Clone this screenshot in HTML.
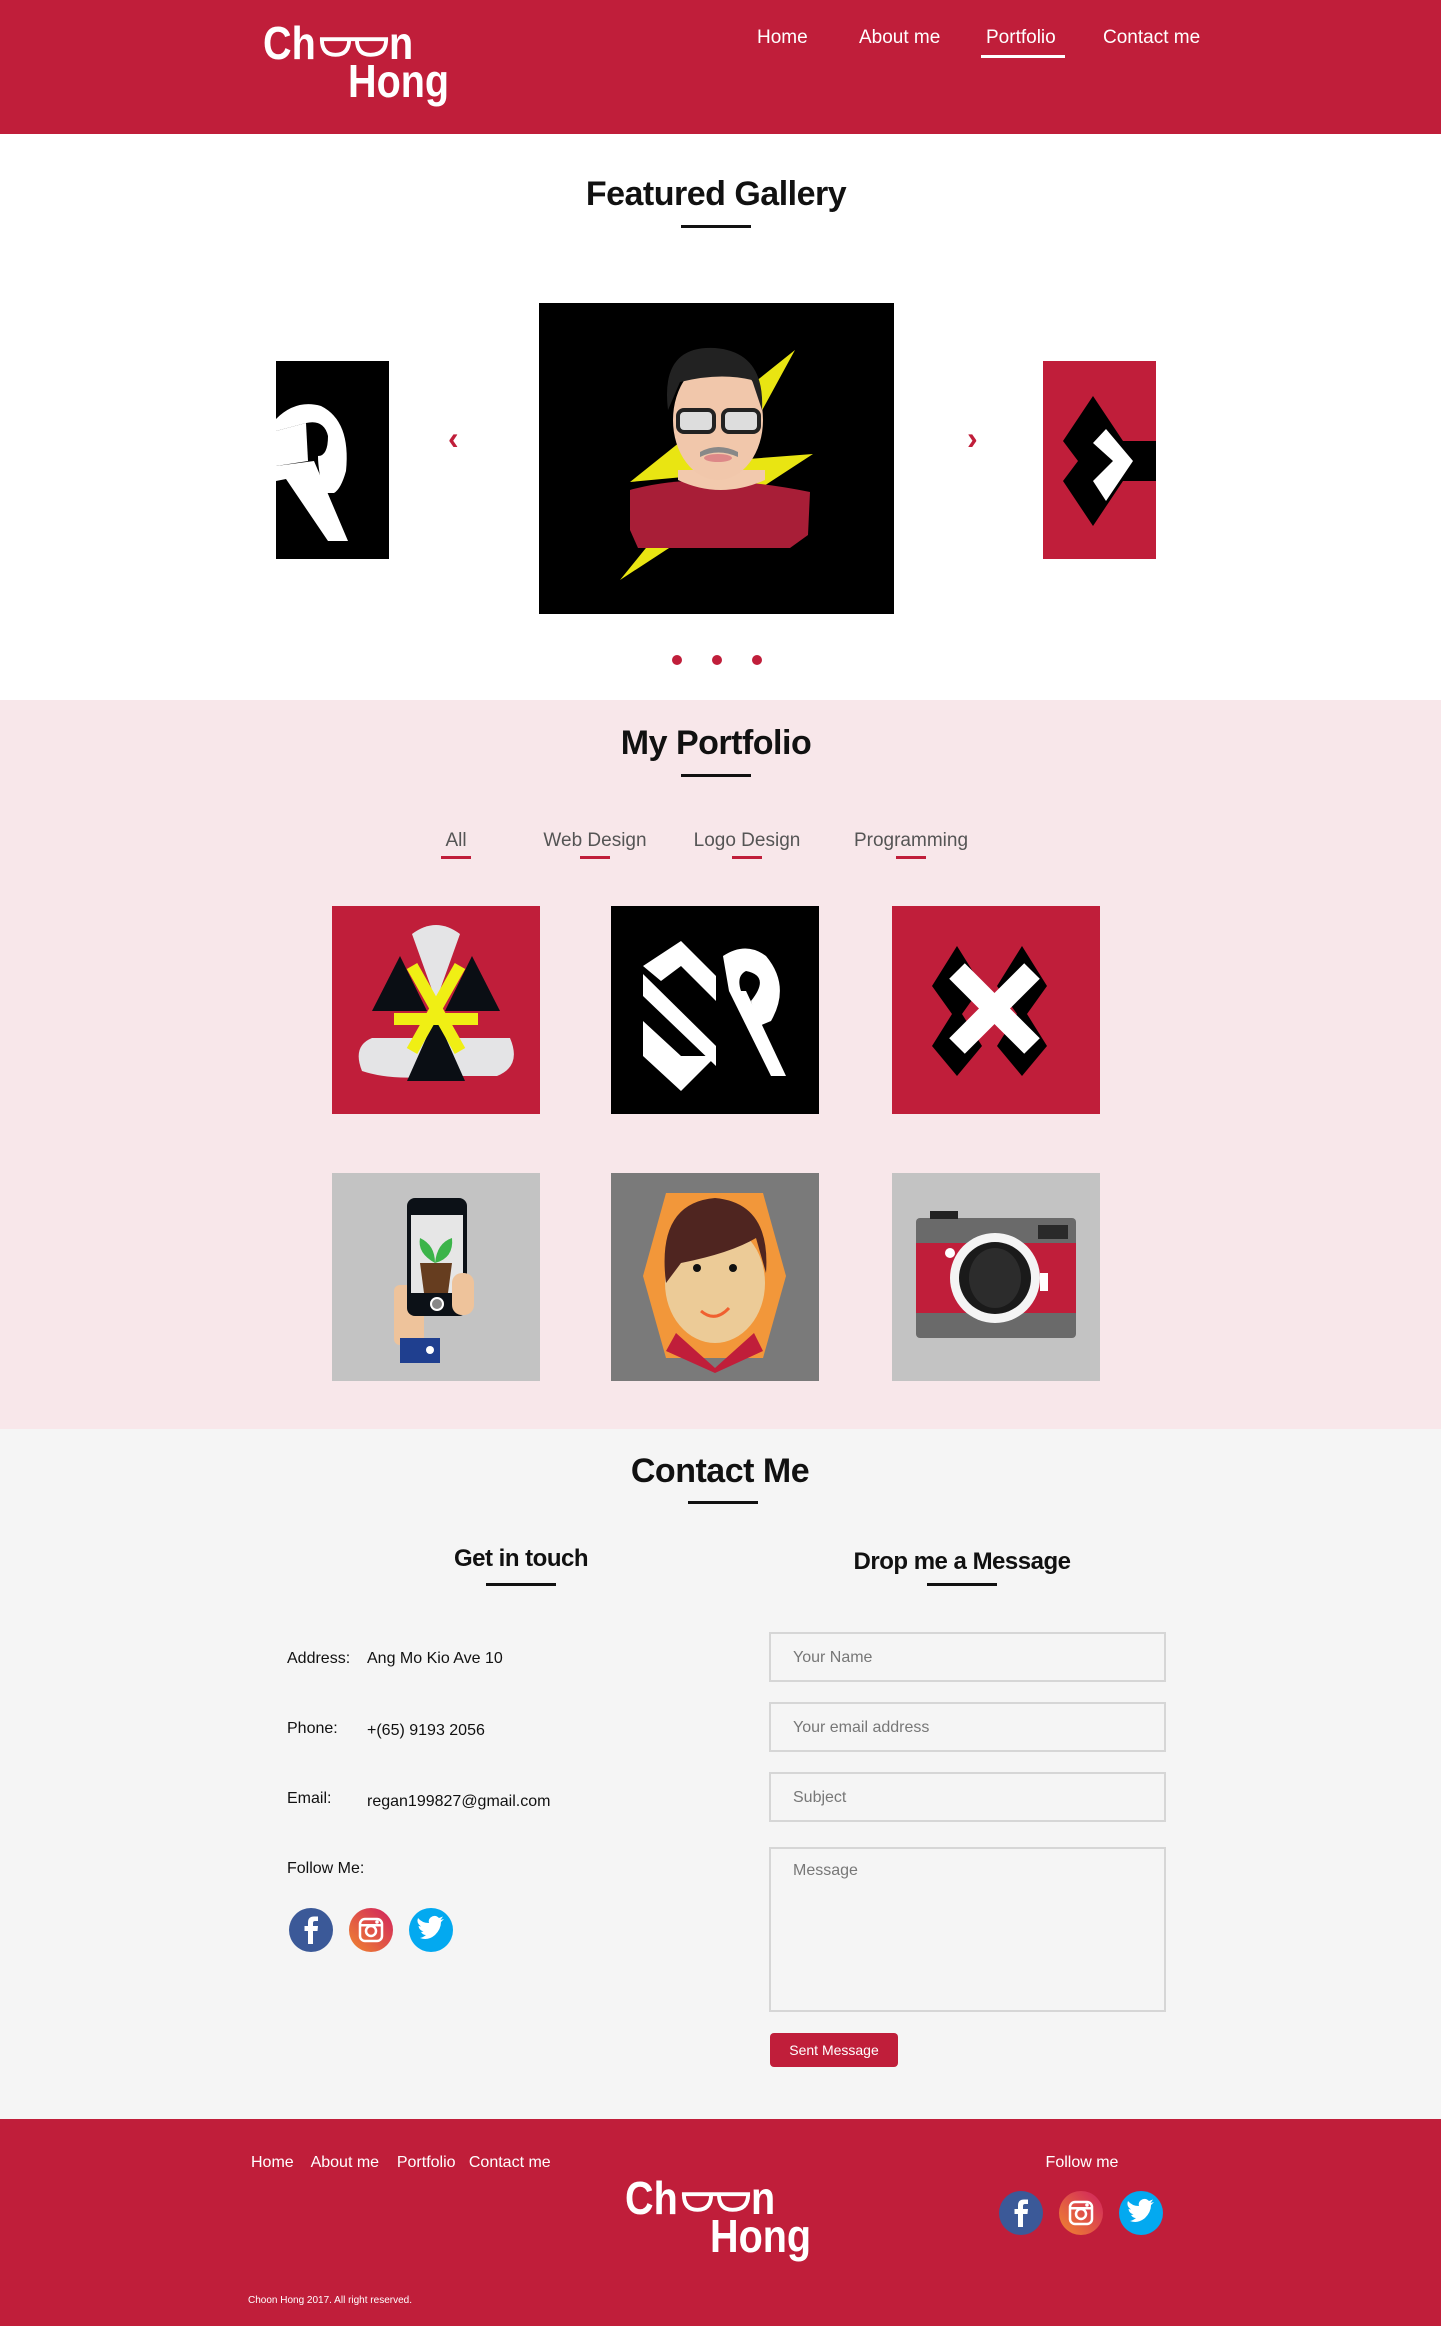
<!DOCTYPE html>
<html><head><meta charset="utf-8">
<style>
*{margin:0;padding:0;box-sizing:border-box}
body{width:1441px;height:2328px;position:relative;background:#fff;font-family:"Liberation Sans",sans-serif;overflow:hidden}
.a{position:absolute}
.red{background:#c01e3a}
.nav{color:#fff;font-size:19px;top:27px}
.h2{font-weight:bold;font-size:34px;color:#111;text-align:center;width:400px;letter-spacing:-0.5px}
.ul{height:3px;background:#111;width:70px}
.logo{color:#fff;font-weight:bold;font-size:46px;line-height:46px;transform:scaleX(0.86);transform-origin:0 0}
.flt{font-size:19px;color:#555;top:830px;text-align:center;width:160px}
.flu{height:3px;background:#c01e3a;width:30px;top:856px}
.tile{width:208px;height:208px;overflow:hidden}
.lbl{font-size:16px;color:#111}
.inp{border:2px solid #d6d6d6;background:#f5f5f5;color:#777;font-size:16px;padding-left:22px;left:769px;width:397px}
</style></head><body>
<!-- header -->
<div class="a red" style="left:0;top:0;width:1441px;height:134px"></div>
<div class="a logo" style="left:263px;top:20px">Ch</div>
<svg class="a" style="left:318px;top:36px" width="72" height="22" viewBox="0 0 74 22"><path d="M2 3 H72 M4 3 Q4 19 18 19 Q32 19 32 3 M40 3 Q40 19 54 19 Q70 19 70 3" fill="none" stroke="#fff" stroke-width="4"/></svg>
<div class="a logo" style="left:389px;top:20px">n</div>
<div class="a logo" style="left:348px;top:58px">Hong</div>
<div class="a nav" style="left:757px">Home</div>
<div class="a nav" style="left:859px">About me</div>
<div class="a nav" style="left:986px">Portfolio</div>
<div class="a nav" style="left:1103px">Contact me</div>
<div class="a" style="left:981px;top:55px;width:84px;height:3px;background:#fff"></div>

<!-- featured -->
<div class="a h2" style="left:516px;top:175px">Featured Gallery</div>
<div class="a ul" style="left:681px;top:225px"></div>
<svg class="a" style="left:276px;top:361px" width="113" height="198" viewBox="0 0 113 198"><rect width="113" height="198" fill="#000"/><path d="M0 58 Q20 38 45 45 Q75 60 70 110 Q65 128 58 132 L48 132 Q42 110 42 95 Q52 95 52 75 Q48 58 30 62 L0 70 Z" fill="#fff"/><path d="M0 70 L30 62 L32 100 L0 105 Z" fill="#fff"/><path d="M0 105 L38 100 L72 180 L52 180 L10 118 L0 120 Z" fill="#fff"/></svg>
<div class="a" style="left:448px;top:420px;color:#c01e3a;font-size:32px;font-weight:bold">&#x2039;</div>
<svg class="a" style="left:539px;top:303px" width="355" height="311" viewBox="539 303 355 311"><rect x="539" y="303" width="355" height="311" fill="#000"/>
<polygon points="795,350 630,482 705,475 620,580 813,454 735,460" fill="#e9e512"/>
<path d="M630 490 Q700 470 810 492 L808 535 L790 548 L638 548 L630 530 Z" fill="#a81e37"/>
<path d="M678 480 Q720 500 765 480 L765 470 L678 470 Z" fill="#f2c9ad"/>
<ellipse cx="718" cy="420" rx="45" ry="60" fill="#f1c7ab"/>
<path d="M668 410 Q660 345 715 348 Q765 352 762 410 L752 380 Q720 372 680 382 Z" fill="#222"/>
<rect x="678" y="410" width="36" height="22" rx="6" fill="#ddd" stroke="#222" stroke-width="4"/><rect x="723" y="410" width="36" height="22" rx="6" fill="#ddd" stroke="#222" stroke-width="4"/>
<path d="M700 452 Q718 442 738 452 L738 457 Q718 448 700 457Z" fill="#888"/><ellipse cx="718" cy="458" rx="14" ry="4" fill="#d88"/>
</svg>
<div class="a" style="left:967px;top:420px;color:#c01e3a;font-size:32px;font-weight:bold">&#x203A;</div>
<svg class="a" style="left:1043px;top:361px" width="113" height="198" viewBox="0 0 113 198"><rect width="113" height="198" fill="#c01e3a"/><polygon points="50,35 80,80 113,80 113,120 80,120 50,165 20,120 35,100 20,80" fill="#000"/><polygon points="63,68 90,100 63,140 50,120 70,100 50,82" fill="#fff"/></svg>
<div class="a" style="left:672px;top:655px;width:10px;height:10px;border-radius:50%;background:#c01e3a"></div>
<div class="a" style="left:712px;top:655px;width:10px;height:10px;border-radius:50%;background:#c01e3a"></div>
<div class="a" style="left:752px;top:655px;width:10px;height:10px;border-radius:50%;background:#c01e3a"></div>

<!-- portfolio -->
<div class="a" style="left:0;top:700px;width:1441px;height:729px;background:#f8e7ea"></div>
<div class="a h2" style="left:516px;top:724px">My Portfolio</div>
<div class="a ul" style="left:681px;top:774px"></div>
<div class="a flt" style="left:376px">All</div><div class="a flu" style="left:441px"></div>
<div class="a flt" style="left:515px">Web Design</div><div class="a flu" style="left:580px"></div>
<div class="a flt" style="left:667px">Logo Design</div><div class="a flu" style="left:732px"></div>
<div class="a flt" style="left:831px">Programming</div><div class="a flu" style="left:896px"></div>

<svg class="a tile" style="left:332px;top:906px" viewBox="0 0 208 208"><rect width="208" height="208" fill="#c01e3a"/>
<path d="M80 28 Q104 10 128 28 L104 95 Z" fill="#e4e4e6"/><path d="M40 132 L130 132 L104 170 Q60 175 30 165 Q20 140 40 132Z" fill="#e4e4e6"/><path d="M128 132 L178 132 Q190 160 165 170 L104 170 Z" fill="#e4e4e6"/>
<polygon points="68,50 40,105 95,105" fill="#0a0e14"/><polygon points="140,50 168,105 113,105" fill="#0a0e14"/><polygon points="104,110 75,175 133,175" fill="#0a0e14"/>
<path d="M80 60 L128 145 M128 60 L80 145 M62 113 H146" stroke="#f0ef14" stroke-width="12"/></svg>
<svg class="a tile" style="left:611px;top:906px" viewBox="0 0 208 208"><rect width="208" height="208" fill="#000"/>
<polygon points="70,35 105,70 105,95 70,60 50,75 32,60" fill="#fff"/><polygon points="32,68 105,140 105,160 32,90" fill="#fff"/><polygon points="32,115 70,150 105,150 70,185 32,150" fill="#fff"/>
<path d="M112 50 Q135 35 155 50 Q180 80 160 115 L148 120 L140 95 Q160 70 135 65 Q125 70 130 85 L118 85 Z" fill="#fff"/><polygon points="118,85 135,85 175,170 160,170" fill="#fff"/></svg>
<svg class="a tile" style="left:892px;top:906px" viewBox="0 0 208 208"><rect width="208" height="208" fill="#c01e3a"/>
<polygon points="40,40 65,80 40,115 15,80" fill="#000" transform="translate(25,0)"/><polygon points="105,40 130,80 105,115 80,80" fill="#000" transform="translate(25,0)"/>
<polygon points="40,100 65,140 40,170 15,140" fill="#000" transform="translate(25,0)"/><polygon points="105,100 130,140 105,170 80,140" fill="#000" transform="translate(25,0)"/>
<path d="M65 65 L140 140 M140 65 L65 140" stroke="#fff" stroke-width="22"/></svg>

<svg class="a tile" style="left:332px;top:1173px" viewBox="0 0 208 208"><rect width="208" height="208" fill="#c3c3c3"/>
<rect x="62" y="112" width="30" height="60" rx="6" fill="#eec39b"/><rect x="68" y="165" width="40" height="25" fill="#1f3f8f"/><circle cx="98" cy="177" r="4" fill="#fff"/>
<rect x="75" y="25" width="60" height="118" rx="8" fill="#0c1117"/><rect x="79" y="42" width="52" height="78" fill="#e6e6e6"/><circle cx="105" cy="131" r="6" fill="#888" stroke="#fff" stroke-width="2"/>
<path d="M103 90 Q85 80 88 65 Q103 72 103 90 Q105 70 120 65 Q122 85 103 90" fill="#3cb44a"/><polygon points="88,90 120,90 116,120 92,120" fill="#663d1f"/>
<rect x="120" y="100" width="22" height="42" rx="10" fill="#eec39b"/></svg>
<svg class="a tile" style="left:611px;top:1173px" viewBox="0 0 208 208"><rect width="208" height="208" fill="#7a7a7a"/>
<polygon points="55,20 152,20 175,103 152,185 55,185 32,103" fill="#f2973a"/>
<ellipse cx="104" cy="110" rx="50" ry="60" fill="#eccb97"/><path d="M55 110 Q45 30 104 25 Q160 30 155 100 L145 65 Q120 80 70 90 Z" fill="#4f2520"/>
<circle cx="86" cy="95" r="4" fill="#111"/><circle cx="122" cy="95" r="4" fill="#111"/><path d="M90 138 Q104 150 118 135" stroke="#f06030" stroke-width="3" fill="none"/>
<polygon points="55,178 65,160 104,195 143,160 152,178 104,200" fill="#c01e3a"/></svg>
<svg class="a tile" style="left:892px;top:1173px" viewBox="0 0 208 208"><rect width="208" height="208" fill="#c3c3c3"/>
<rect x="24" y="45" width="160" height="120" rx="4" fill="#6a6a6a"/><rect x="38" y="38" width="28" height="8" fill="#222"/><rect x="146" y="52" width="30" height="14" fill="#2a2a2a"/>
<rect x="24" y="70" width="160" height="70" fill="#c01e3a"/><circle cx="103" cy="105" r="45" fill="#f4f4f4"/><circle cx="103" cy="105" r="36" fill="#1a1a1a"/><ellipse cx="103" cy="105" rx="26" ry="30" fill="#2c2c2c"/><circle cx="58" cy="80" r="5" fill="#fff"/><rect x="148" y="100" width="8" height="18" fill="#fff"/></svg>

<!-- contact -->
<div class="a" style="left:0;top:1429px;width:1441px;height:690px;background:#f5f5f5"></div>
<div class="a h2" style="left:520px;top:1452px">Contact Me</div>
<div class="a ul" style="left:688px;top:1501px"></div>
<div class="a" style="left:371px;top:1545px;width:300px;text-align:center;font-weight:bold;font-size:24px;color:#111;letter-spacing:-0.5px">Get in touch</div>
<div class="a ul" style="left:486px;top:1583px"></div>
<div class="a" style="left:762px;top:1548px;width:400px;text-align:center;font-weight:bold;font-size:24px;color:#111;letter-spacing:-0.5px">Drop me a Message</div>
<div class="a ul" style="left:927px;top:1583px"></div>
<div class="a lbl" style="left:287px;top:1650px">Address:</div><div class="a lbl" style="left:367px;top:1650px">Ang Mo Kio Ave 10</div>
<div class="a lbl" style="left:287px;top:1720px">Phone:</div><div class="a lbl" style="left:367px;top:1722px">+(65) 9193 2056</div>
<div class="a lbl" style="left:287px;top:1790px">Email:</div><div class="a lbl" style="left:367px;top:1793px">regan199827@gmail.com</div>
<div class="a lbl" style="left:287px;top:1860px">Follow Me:</div>

<svg width="0" height="0" style="position:absolute"><defs>
<linearGradient id="ig" x1="0" y1="1" x2="1" y2="0"><stop offset="0" stop-color="#f0862f"/><stop offset="1" stop-color="#d0215f"/></linearGradient></defs></svg>
<svg class="a" style="left:289px;top:1908px" width="164" height="44" viewBox="0 0 164 44">
<circle cx="22" cy="22" r="22" fill="#3b5998"/><path d="M24 36 V23 H28.5 L29 18 H24 V15 Q24 13 26 13 H29 V8.5 H25 Q19 8.5 19 14.5 V18 H15.5 V23 H19 V36Z" fill="#fff"/>
<circle cx="82" cy="22" r="22" fill="url(#ig)"/><rect x="71" y="11" width="22" height="22" rx="5" fill="none" stroke="#fff" stroke-width="2.5"/><circle cx="82" cy="23" r="5" fill="none" stroke="#fff" stroke-width="2.5"/><rect x="71" y="16" width="22" height="2.5" fill="#fff"/><circle cx="88" cy="14" r="1.8" fill="#fff"/>
<circle cx="142" cy="22" r="22" fill="#03a9f0"/><path d="M131 30 Q139 33 146 27 Q152 21 152 14 L155 11 L151.5 12 L154 8.5 L150 10 Q146 6 141.5 9.5 Q139 12 140 15 Q133 15 129 10 Q127 15 132 18.5 L129.5 18 Q130 22 134.5 23.5 L132 24 Q134 27 137 27 Q134 29.5 131 30Z" fill="#fff"/></svg>

<div class="a inp" style="top:1632px;height:50px;line-height:48px">Your Name</div>
<div class="a inp" style="top:1702px;height:50px;line-height:48px">Your email address</div>
<div class="a inp" style="top:1772px;height:50px;line-height:48px">Subject</div>
<div class="a inp" style="top:1847px;height:165px;padding-top:13px">Message</div>
<div class="a" style="left:770px;top:2033px;width:128px;height:34px;background:#c01e3a;border-radius:4px;color:#fff;font-size:14px;text-align:center;line-height:34px">Sent Message</div>

<!-- footer -->
<div class="a red" style="left:0;top:2119px;width:1441px;height:207px"></div>
<div class="a" style="left:251px;top:2154px;color:#fff;font-size:16px">Home&nbsp;&nbsp;&nbsp; About me&nbsp;&nbsp;&nbsp; Portfolio&nbsp;&nbsp; Contact me</div>
<div class="a logo" style="left:625px;top:2175px">Ch</div>
<svg class="a" style="left:680px;top:2191px" width="72" height="22" viewBox="0 0 74 22"><path d="M2 3 H72 M4 3 Q4 19 18 19 Q32 19 32 3 M40 3 Q40 19 54 19 Q70 19 70 3" fill="none" stroke="#fff" stroke-width="4"/></svg>
<div class="a logo" style="left:751px;top:2175px">n</div>
<div class="a logo" style="left:710px;top:2213px">Hong</div>
<div class="a" style="left:1032px;top:2154px;width:100px;text-align:center;color:#fff;font-size:16px">Follow me</div>
<svg class="a" style="left:999px;top:2191px" width="164" height="44" viewBox="0 0 164 44">
<circle cx="22" cy="22" r="22" fill="#3b5998"/><path d="M24 36 V23 H28.5 L29 18 H24 V15 Q24 13 26 13 H29 V8.5 H25 Q19 8.5 19 14.5 V18 H15.5 V23 H19 V36Z" fill="#fff"/>
<circle cx="82" cy="22" r="22" fill="url(#ig)"/><rect x="71" y="11" width="22" height="22" rx="5" fill="none" stroke="#fff" stroke-width="2.5"/><circle cx="82" cy="23" r="5" fill="none" stroke="#fff" stroke-width="2.5"/><rect x="71" y="16" width="22" height="2.5" fill="#fff"/><circle cx="88" cy="14" r="1.8" fill="#fff"/>
<circle cx="142" cy="22" r="22" fill="#03a9f0"/><path d="M131 30 Q139 33 146 27 Q152 21 152 14 L155 11 L151.5 12 L154 8.5 L150 10 Q146 6 141.5 9.5 Q139 12 140 15 Q133 15 129 10 Q127 15 132 18.5 L129.5 18 Q130 22 134.5 23.5 L132 24 Q134 27 137 27 Q134 29.5 131 30Z" fill="#fff"/></svg>
<div class="a" style="left:248px;top:2295px;color:#fff;font-size:10px">Choon Hong 2017. All right reserved.</div>
</body></html>
